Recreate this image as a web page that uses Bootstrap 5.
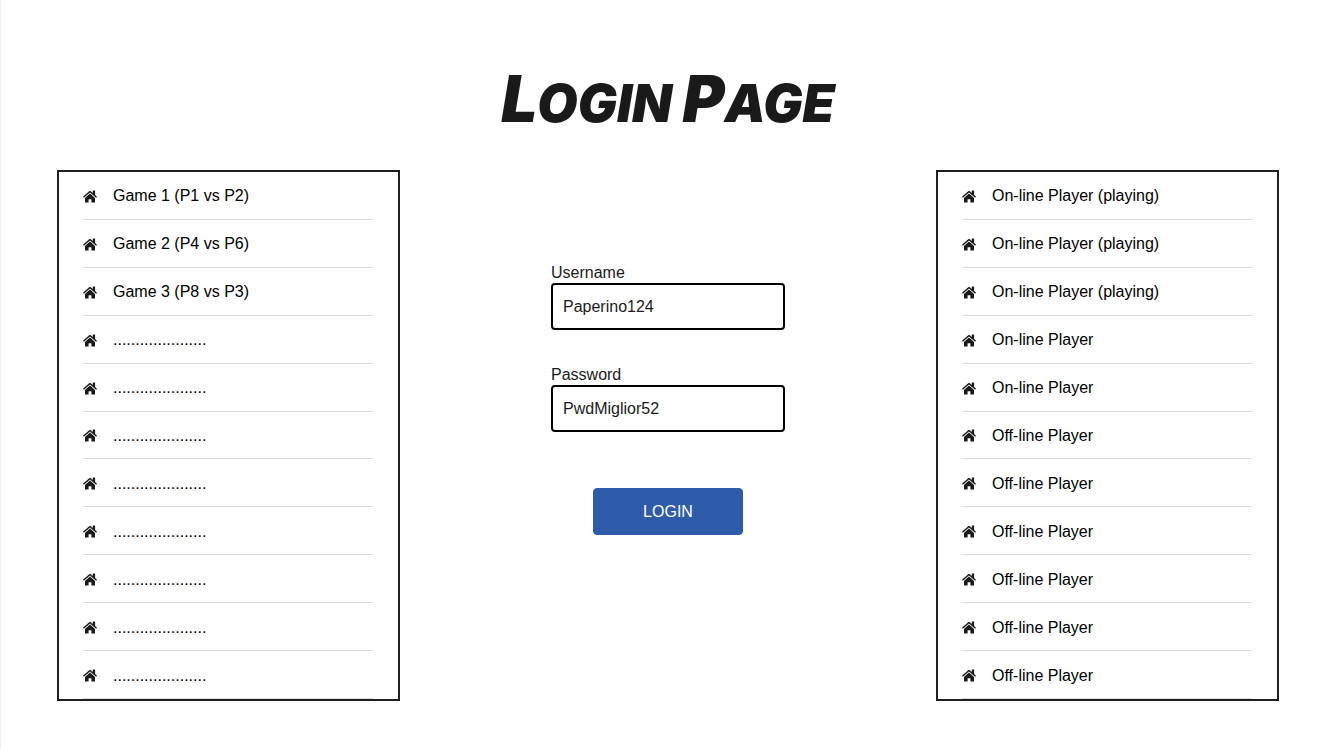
<!DOCTYPE html>
<html lang="en">
<head>
<meta charset="utf-8">
<meta name="viewport" content="width=device-width, initial-scale=1">
<title>Login Page</title>
<link href="https://cdn.jsdelivr.net/npm/bootstrap@5.3.0/dist/css/bootstrap.min.css" rel="stylesheet">
<style>
  body { font-family: "Liberation Sans", Arial, sans-serif; font-size: 16px; line-height: 20px; color: #1a1a1a; background: #fefefe; }
  .page { border-left: 1px solid #f0f0f0; padding: 64px 54px 47px 56px; min-height: 100vh; }
  .title { font-family: "Permanent Marker", Inter, sans-serif; font-size: 52px; font-weight: 900; font-style: italic; line-height: 80px; margin-bottom: 26px; color: #1a1a1a; }
  .title .initial { font-size: 64px; line-height: 64px; }
  .panel { flex: 0 1 343px; height: 531px; border: 2px solid #1f1f1f; padding: 0 25px 0 24px; background: #fff; }
  .panel li { flex: 1 1 0; border-bottom: 1px solid #dcdcdc; gap: 16px; padding-top: 2px; color: #000; }
  .panel svg { width: 14px; height: 13px; flex: none; fill: #1a1a1a; }
  .login { width: 234px; padding-top: 93px; }
  .login .form-control { height: 47px; padding: 8px 10px; border: 2px solid #000; border-radius: 4px; color: #1a1a1a; background: #fff; line-height: 20px; }
  .field { margin-bottom: 35px; }
  .btn-login { width: 150px; height: 47px; margin-top: 21px; border-radius: 4px; --bs-btn-color: #fff; --bs-btn-bg: #2f5caa; --bs-btn-border-color: #2f5caa; --bs-btn-hover-color: #fff; --bs-btn-hover-bg: #264c8e; }
</style>
</head>
<body>
<svg class="d-none" aria-hidden="true">
  <symbol id="home" viewBox="0 0 14 13">
    <path d="M0 6.7 6.2 1.2Q7 .5 7.8 1.2L9.8 3V.6h2.3v4.3L14 6.7l-.9 1L7 2.4.9 7.7z"/>
    <path d="M7 3.6l5 4.3v4.7H8.4V9.3H5.6v3.3H2V7.9z"/>
  </symbol>
</svg>
<main class="page">
  <h1 class="title text-uppercase text-center"><span class="initial">L</span>ogin <span class="initial">P</span>age</h1>
  <div class="d-flex justify-content-between align-items-start">
    <ul class="panel list-unstyled d-flex flex-column mb-0" aria-label="Games">
      <li class="d-flex align-items-center"><svg><use href="#home"/></svg>Game 1 (P1 vs P2)</li>
      <li class="d-flex align-items-center"><svg><use href="#home"/></svg>Game 2 (P4 vs P6)</li>
      <li class="d-flex align-items-center"><svg><use href="#home"/></svg>Game 3 (P8 vs P3)</li>
      <li class="d-flex align-items-center"><svg><use href="#home"/></svg>.....................</li>
      <li class="d-flex align-items-center"><svg><use href="#home"/></svg>.....................</li>
      <li class="d-flex align-items-center"><svg><use href="#home"/></svg>.....................</li>
      <li class="d-flex align-items-center"><svg><use href="#home"/></svg>.....................</li>
      <li class="d-flex align-items-center"><svg><use href="#home"/></svg>.....................</li>
      <li class="d-flex align-items-center"><svg><use href="#home"/></svg>.....................</li>
      <li class="d-flex align-items-center"><svg><use href="#home"/></svg>.....................</li>
      <li class="d-flex align-items-center"><svg><use href="#home"/></svg>.....................</li>
    </ul>
    <form class="login d-flex flex-column">
      <div class="field">
        <label for="username" class="d-block">Username</label>
        <input id="username" class="form-control" type="text" value="Paperino124">
      </div>
      <div class="field">
        <label for="password" class="d-block">Password</label>
        <input id="password" class="form-control" type="text" value="PwdMiglior52">
      </div>
      <button type="submit" class="btn btn-login align-self-center">LOGIN</button>
    </form>
    <ul class="panel list-unstyled d-flex flex-column mb-0" aria-label="Players">
      <li class="d-flex align-items-center"><svg><use href="#home"/></svg>On-line Player (playing)</li>
      <li class="d-flex align-items-center"><svg><use href="#home"/></svg>On-line Player (playing)</li>
      <li class="d-flex align-items-center"><svg><use href="#home"/></svg>On-line Player (playing)</li>
      <li class="d-flex align-items-center"><svg><use href="#home"/></svg>On-line Player</li>
      <li class="d-flex align-items-center"><svg><use href="#home"/></svg>On-line Player</li>
      <li class="d-flex align-items-center"><svg><use href="#home"/></svg>Off-line Player</li>
      <li class="d-flex align-items-center"><svg><use href="#home"/></svg>Off-line Player</li>
      <li class="d-flex align-items-center"><svg><use href="#home"/></svg>Off-line Player</li>
      <li class="d-flex align-items-center"><svg><use href="#home"/></svg>Off-line Player</li>
      <li class="d-flex align-items-center"><svg><use href="#home"/></svg>Off-line Player</li>
      <li class="d-flex align-items-center"><svg><use href="#home"/></svg>Off-line Player</li>
    </ul>
  </div>
</main>
<script src="https://cdn.jsdelivr.net/npm/bootstrap@5.3.0/dist/js/bootstrap.bundle.min.js"></script>
</body>
</html>
